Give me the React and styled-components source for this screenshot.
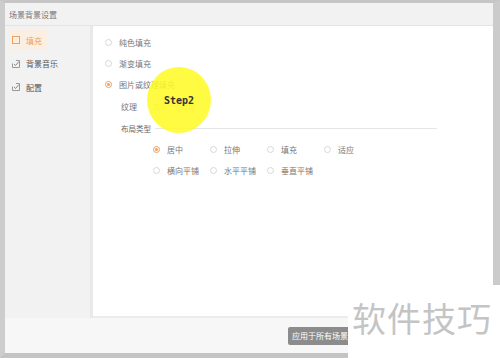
import React from 'react'
import styled, { createGlobalStyle } from 'styled-components'

const Global = createGlobalStyle`
  html, body { margin: 0; padding: 0; background: #fff; }
  body { font-family: "Noto Sans CJK SC", "Noto Sans", sans-serif; }
`

const Page = styled.div`
  position: relative;
  width: 500px;
  height: 358px;
  overflow: hidden;
`

const Frame = styled.div`
  width: 500px;
  height: 358px;
  box-sizing: border-box;
  border-top: 3px solid #c6c6c6;
  border-left: 5px solid #cdcdcd;
  border-right: 7px solid #cbcbcb;
  border-bottom: 5px solid #c4c4c4;
  background: #f2f2f2;
  display: flex;
  flex-direction: column;
`

const TitleBar = styled.div`
  height: 22px;
  padding-left: 4px;
  display: flex;
  align-items: center;
  font-size: 8px;
  color: #777;
  border-bottom: 1px solid #e4e4e4;
`

const Body = styled.div`
  flex: 1;
  display: flex;
`

const Sidebar = styled.div`
  width: 85px;
  padding-top: 4px;
  display: flex;
  flex-direction: column;
  gap: 3.5px;
  border-right: 3px solid #e9e9e9;
`

const NavItem = styled.div`
  height: 20px;
  width: fit-content;
  margin-left: 4px;
  display: flex;
  align-items: center;
  gap: 6px;
  padding: 0 5px 0 3px;
  font-size: 8px;
  color: ${p => (p.$active ? '#f0a060' : '#555')};
  background: ${p => (p.$active ? '#fbeee2' : 'transparent')};
`

const Main = styled.div`
  flex: 1;
  background: #fff;
  padding: 6px 0 0 12px;
  display: flex;
  flex-direction: column;
  border-bottom: 2px solid #ececec;
`

const RadioRow = styled.label`
  display: flex;
  align-items: center;
  gap: 7px;
  height: 21px;
  font-size: 8px;
  color: #777;
`

const Dot = styled.span`
  width: 7px;
  height: 7px;
  border-radius: 50%;
  box-sizing: border-box;
  border: 1px solid ${p => (p.$on ? '#f0a060' : '#d8d8d8')};
  background: #fff;
  display: inline-flex;
  align-items: center;
  justify-content: center;
  &::after {
    content: '';
    width: 3px;
    height: 3px;
    border-radius: 50%;
    background: ${p => (p.$on ? '#f0a060' : 'transparent')};
  }
`

const FieldRow = styled.div`
  display: flex;
  align-items: center;
  height: 22px;
  padding-left: 16px;
  font-size: 8px;
  color: #777;
  gap: 16px;
`

const Faint = styled.span`
  font-size: 7px;
  color: #ccc;
`

const SectionRow = styled.div`
  display: flex;
  align-items: center;
  height: 22px;
  padding-left: 16px;
  font-size: 7.5px;
  color: #666;
  gap: 4px;
`

const Rule = styled.div`
  width: 282px;
  height: 1px;
  background: #e6e6e6;
`

const Grid = styled.div`
  display: grid;
  grid-template-columns: repeat(4, 57px);
  padding-left: 48px;
`

const Footer = styled.div`
  height: 35px;
  background: #f7f7f7;
  display: flex;
  align-items: center;
  padding-left: 283px;
`

const ApplyButton = styled.div`
  width: 62px;
  height: 18px;
  border-radius: 2px;
  background: #8c8c8c;
  color: #fff;
  font-size: 8px;
  display: flex;
  align-items: center;
  padding-left: 4px;
  box-sizing: border-box;
  white-space: nowrap;
  overflow: hidden;
`

const Spot = styled.div`
  position: absolute;
  left: 147px;
  top: 67px;
  width: 64px;
  height: 66px;
  border-radius: 50%;
  background: rgba(255, 250, 40, 0.88);
  display: flex;
  align-items: center;
  justify-content: center;
  font-family: "DejaVu Sans Mono", monospace;
  font-weight: bold;
  font-size: 10px;
  color: #333;
`

const Watermark = styled.div`
  position: absolute;
  right: 0;
  bottom: 0;
  width: 152px;
  height: 73px;
  box-sizing: border-box;
  padding: 0 0 8px 4px;
  display: flex;
  align-items: center;
  background: #fff;
  font-size: 34px;
  letter-spacing: 1px;
  color: #c4c4c4;
  white-space: nowrap;
`

const SquareIcon = ({ color }) => (
  <svg width="8" height="8" viewBox="0 0 8 8">
    <rect x="0.5" y="0.5" width="7" height="7" fill="none" stroke={color} strokeWidth="1" />
  </svg>
)

const CheckIcon = () => (
  <svg width="8" height="8" viewBox="0 0 8 8">
    <path d="M0.5 3.5V7.5H7.5V0.5H4" fill="none" stroke="#999" strokeWidth="1" />
    <path d="M2 4l1.5 1.5L7 1.5" fill="none" stroke="#888" strokeWidth="1" />
  </svg>
)

const layouts = [
  ['居中', true],
  ['拉伸'],
  ['填充'],
  ['适应'],
  ['横向平铺'],
  ['水平平铺'],
  ['垂直平铺'],
]

export default function App() {
  return (
    <>
      <Global />
      <Page>
        <Frame>
          <TitleBar>场景背景设置</TitleBar>
          <Body>
            <Sidebar>
              <NavItem $active>
                <SquareIcon color="#f0a060" />
                填充
              </NavItem>
              <NavItem>
                <CheckIcon />
                背景音乐
              </NavItem>
              <NavItem>
                <CheckIcon />
                配置
              </NavItem>
            </Sidebar>
            <Main>
              <RadioRow><Dot />纯色填充</RadioRow>
              <RadioRow><Dot />渐变填充</RadioRow>
              <RadioRow><Dot $on />图片或纹理填充</RadioRow>
              <FieldRow>
                纹理
                <Faint>选择一个纹理</Faint>
              </FieldRow>
              <SectionRow>
                布局类型
                <Rule />
              </SectionRow>
              <Grid>
                {layouts.map(([label, on]) => (
                  <RadioRow key={label}>
                    <Dot $on={on} />
                    {label}
                  </RadioRow>
                ))}
              </Grid>
            </Main>
          </Body>
          <Footer>
            <ApplyButton>应用于所有场景</ApplyButton>
          </Footer>
        </Frame>
        <Spot>Step2</Spot>
        <Watermark>软件技巧</Watermark>
      </Page>
    </>
  )
}
